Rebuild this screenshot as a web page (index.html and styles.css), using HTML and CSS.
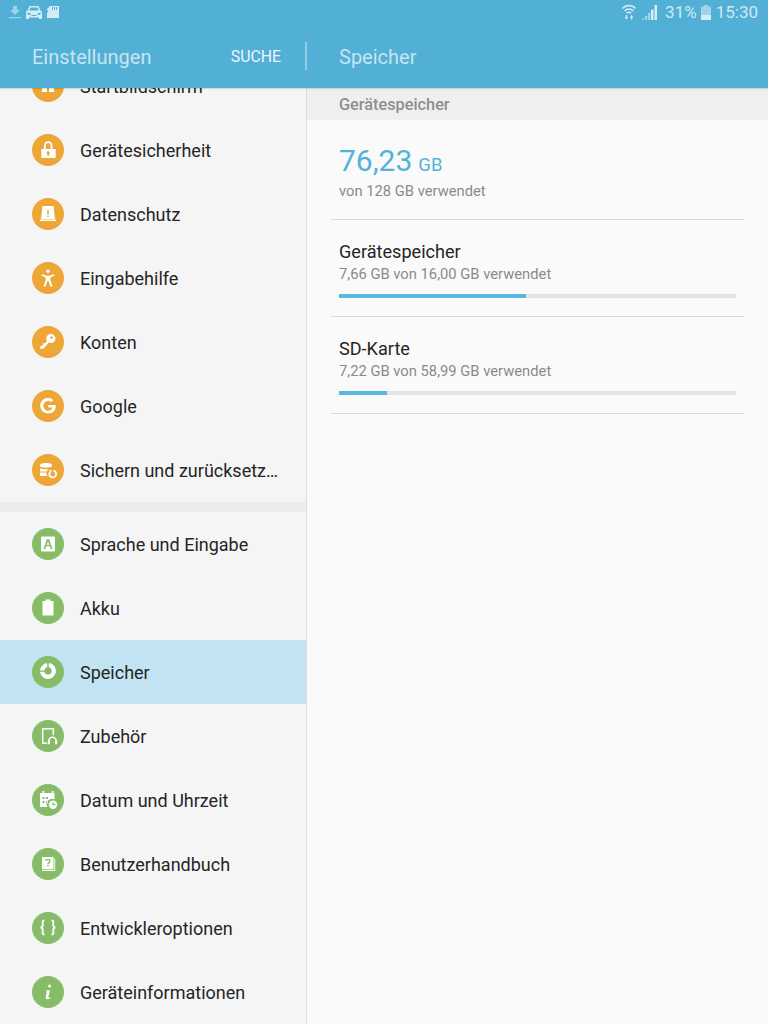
FILE: index.html
```html
<!DOCTYPE html>
<html lang="de">
<head>
<meta charset="utf-8">
<title>Speicher</title>
<link rel="stylesheet" href="styles.css">
</head>
<body>
<div class="screen">
  <header class="top">
    <div class="status">
      <div class="status-left">
        <svg class="si" width="12" height="14" viewBox="0 0 12 14"><path class="dim" d="M4 1h4v4h3L6 10 1 5h3zM0 12h12v1.200H0z"/></svg>
        <svg class="si" width="16" height="14" viewBox="0 0 16 14"><path class="solid" fill-rule="evenodd" d="M3.500 1h9l2 4.500c.8.500 1.500 1 1.500 2V14h-3v-1.500H3V14H0V7.500c0-1 .7-1.500 1.500-2zM4.500 2.500 3.200 5.500h9.600l-1.300-3zM1.500 7.500v2l3 .5V8.500zM14.500 7.500l-3 1V10l3-.5zM5.500 10v1h5v-1z"/></svg>
        <svg class="si" width="12" height="14" viewBox="0 0 12 14"><path class="solid" d="M3 1h9v12H0V8l1.500-1.500L0 5V4zM5 2v3h1V2zM7 2v3h1V2zM9 2v3h1V2z"/></svg>
      </div>
      <div class="status-right">
        <svg class="st-wifi" width="14" height="16" viewBox="0 0 14 16"><path class="ln" d="M.5 4.500c3.500-4 9.500-4 13 0M2.700 7c2.500-2.700 6.100-2.700 8.600 0M4.800 9.300c1.200-1.300 3.200-1.300 4.400 0"/><path class="solid" d="M3.800 11h1.200v2h1.100l-1.700 2.600L2.700 13h1.100zM9 15.600h1.200v-2h1.100L9.600 11 7.900 13.600H9z"/></svg>
        <svg class="st-sig" width="15" height="15" viewBox="0 0 15 15"><path class="solid" d="M12.500 0H15v15h-2.500z"/><path class="solid" d="M9 4.500h2.500V15H9z"/><path class="dim" d="M6 8h2.200v7H6zM3 11h2.200v4H3zM0 13.500h2.200V15H0z"/></svg>
        <span class="pct">31%</span>
        <svg class="st-bat" width="10" height="15" viewBox="0 0 10 15"><path class="dim" d="M3 0h4v1.500h3V10H0V1.500h3z"/><path class="solid" d="M0 10h10v5H0z"/></svg>
        <span class="clock">15:30</span>
      </div>
    </div>
    <div class="bar">
      <div class="bar-left">
        <span class="bar-title">Einstellungen</span>
        <span class="search">SUCHE</span>
      </div>
      <div class="bar-rule"></div>
      <span class="bar-title bar-page">Speicher</span>
    </div>
  </header>

  <div class="body">
    <nav class="side">
      <ul class="list list-first">
        <li class="item"><span class="ic or"><svg viewBox="0 0 32 32"><path d="M10 10h5v12h-5zM17 10h5v12h-5z"/></svg></span>Startbildschirm</li>
        <li class="item"><span class="ic or"><svg viewBox="0 0 32 32"><path fill-rule="evenodd" d="M12 15v-3.500a4.200 4.200 0 0 1 8.400 0V15h3.300v9H9.300v-9zM13.800 15h4.800v-3.500a2.400 2.400 0 0 0-4.800 0zM16.200 17.300a1.500 1.500 0 0 0-.8 2.800V22h1.600v-1.900a1.500 1.500 0 0 0-.8-2.800z"/></svg></span>Gerätesicherheit</li>
        <li class="item"><span class="ic or"><svg viewBox="0 0 32 32"><path fill-rule="evenodd" d="M10.500 8h11l1.500 13H9zM15.200 12v4.500h1.600V12zM15.200 17.500v1.600h1.600v-1.600zM8 21.500h16V23H8z"/></svg></span>Datenschutz</li>
        <li class="item"><span class="ic or"><svg viewBox="0 0 32 32"><circle cx="16" cy="9.300" r="1.700"/><path d="M10 12.300 15 13.800h2l5-1.500.4 1.300-4 1.800v2.600l2.200 6.800h-1.800L16.400 19h-.8L13.200 24.800h-1.800L13.600 18v-2.600l-4-1.800z"/></svg></span>Eingabehilfe</li>
        <li class="item"><span class="ic or"><svg viewBox="0 0 32 32"><path fill-rule="evenodd" d="M18.500 8a4.500 4.500 0 1 1-1.500 8.500L11 23l-2.500-.3L8 20.800l1.300-1.300.9.500 1-1-.6-.9 1-1 .9.600 2.600-2.700A4.500 4.500 0 0 1 18.500 8zM19.500 10.300a1.300 1.300 0 1 0 .01 0z"/></svg></span>Konten</li>
        <li class="item"><span class="ic or"><svg viewBox="0 0 32 32"><path d="M16.300 15h7.400c.5 5-2.700 8.500-7.700 8.500a7.800 7.800 0 1 1 5.300-13.500l-2 2A4.900 4.900 0 1 0 20.800 17.500h-4.500z"/></svg></span>Google</li>
        <li class="item"><span class="ic or"><svg viewBox="0 0 32 32"><path d="M8 11c0-2.700 12-2.700 12 0v1.500c-2 1.500-10 1.500-12 0zM8 14.300c2 1 6.500 1.300 9 .7-1 .6-1.800 1.300-2.200 2.500H8zM8 18.500h6.300c0 1.300.3 2.500 1 3.500H8z"/><path class="ring" d="M21.500 16.700a3.400 3.400 0 1 1-3.500 1.300"/><path d="M17 15.800l3 .5-1.500 2.500z"/></svg></span>Sichern und zurücksetz…</li>
      </ul>
      <ul class="list">
        <li class="item"><span class="ic gr"><svg viewBox="0 0 32 32"><path fill-rule="evenodd" d="M10 8.500h12a1 1 0 0 1 1 1v13a1 1 0 0 1-1 1H10a1 1 0 0 1-1-1v-13a1 1 0 0 1 1-1zM15 11 11.500 21h1.800l.9-2.700h3.600l.9 2.700h1.800L17 11zM16 13.500l1.300 3.400h-2.600z"/></svg></span>Sprache und Eingabe</li>
        <li class="item"><span class="ic gr"><svg viewBox="0 0 32 32"><path d="M13.500 7.500h5V9h3v14.500h-11V9h3z"/></svg></span>Akku</li>
        <li class="item item-on"><span class="ic gr"><svg viewBox="0 0 32 32"><path fill-rule="evenodd" d="M16.800 7A8 8 0 1 1 8 15.800H12.400A3.700 3.700 0 1 0 16.800 11.300zM15.200 7V11.300A3.700 3.700 0 0 0 12.300 14.500H8A8 8 0 0 1 15.200 7z"/></svg></span>Speicher</li>
        <li class="item"><span class="ic gr"><svg viewBox="0 0 32 32"><path class="thin" d="M15 23.300h-4.300V8.700h10.600V15"/><path class="thin" d="M16.800 23v-2a3.700 3.700 0 0 1 7.400 0v2"/><path d="M15.800 20.800h2.200v3.400h-2.200zM23 20.800h2.200v3.400H23z"/></svg></span>Zubehör</li>
        <li class="item"><span class="ic gr"><svg viewBox="0 0 32 32"><path fill-rule="evenodd" d="M10.500 7h1.800v2h7.400V7h1.800v2h1v6.500a5.300 5.300 0 0 0-7 7.500H8V9h2.500zM10.500 13v2h2v-2zM14 13v2h2v-2zM10.500 17v2h2v-2zM14 17v2h2v-2z"/><path fill-rule="evenodd" d="M21 16.500a4.200 4.200 0 1 1 0 8.400 4.200 4.200 0 0 1 0-8.400zM20.400 18v3.200h3v-1.100h-1.900V18z"/></svg></span>Datum und Uhrzeit</li>
        <li class="item"><span class="ic gr"><svg viewBox="0 0 32 32"><path fill-rule="evenodd" d="M10 9h11.500v12H10zM13.300 13h1.700c0-1.500 2.200-1.500 2.200 0 0 1.100-1.900 1.300-1.900 3.200h1.400c0-1.400 2-1.700 2-3.300 0-3-5.400-3-5.400.1zM15.300 17v1.500h1.400V17z"/><path d="M22.300 10.500h.9V23H10v-1.200h12.300z"/></svg></span>Benutzerhandbuch</li>
        <li class="item"><span class="ic gr"><svg viewBox="0 0 32 32"><path class="ring" d="M12.500 8.500c-3 0-1.700 2.300-1.700 4.300 0 1.800-.8 2.700-2.300 2.700 1.500 0 2.300 1 2.300 2.800 0 2-1.300 4.200 1.700 4.200M19.500 8.500c3 0 1.700 2.300 1.700 4.300 0 1.800.8 2.700 2.300 2.700-1.500 0-2.300 1-2.300 2.800 0 2 1.300 4.200-1.700 4.200"/></svg></span>Entwickleroptionen</li>
        <li class="item"><span class="ic gr"><svg viewBox="0 0 32 32"><circle cx="17.600" cy="10" r="1.500"/><path d="M14.200 14.200h3.800l-1.600 6.800c-.2 1 .6 1 2.100.2l.2 1c-2.700 1.600-5.600 1.600-5-1.100l1.300-5.800-1-.2z"/></svg></span>Geräteinformationen</li>
      </ul>
    </nav>

    <main class="detail">
      <div class="section-head">Gerätespeicher</div>
      <div class="rows">
        <div class="total">
          <div class="total-num"><span class="big">76,23</span><span class="unit">GB</span></div>
          <div class="sub">von 128 GB verwendet</div>
        </div>
        <div class="row">
          <div class="row-title">Gerätespeicher</div>
          <div class="sub">7,66 GB von 16,00 GB verwendet</div>
          <div class="track"><div class="fill" style="width:47.100%"></div></div>
        </div>
        <div class="row">
          <div class="row-title">SD-Karte</div>
          <div class="sub">7,22 GB von 58,99 GB verwendet</div>
          <div class="track"><div class="fill" style="width:12.100%"></div></div>
        </div>
      </div>
    </main>
  </div>
</div>
</body>
</html>
```
FILE: styles.css
```css
* { box-sizing: border-box; }
html, body { margin: 0; padding: 0; }
body { font-family: Roboto, "Liberation Sans", sans-serif; background: #fafafa; }
.screen { width: 768px; height: 1024px; overflow: hidden; display: flex; flex-direction: column; }

.top { height: 88px; background: #52afd6; flex: none; position: relative; z-index: 2; box-shadow: 0 1px 1px rgba(0,0,0,.12); }
.status { height: 24px; display: flex; justify-content: space-between; align-items: center; padding: 0 10px 0 9px; }
.status-left { display: flex; gap: 5px; align-items: center; }
.status-right { display: flex; align-items: center; color: #cfe9f3; font-size: 17px; }
.solid { fill: #d3ecf5; }
.dim { fill: #9fd4e9; }
.ln { fill: none; stroke: #d3ecf5; stroke-width: 1.500; }
.st-sig { margin-left: 6px; }
.pct { margin-left: 8px; margin-right: 4px; }
.clock { margin-left: 5px; }

.bar { height: 64px; display: flex; align-items: center; padding-top: 2px; }
.bar-left { width: 305px; padding: 0 24px 0 32px; display: flex; justify-content: space-between; align-items: center; }
.bar-title { font-size: 20px; color: #c5e5f2; }
.search { font-size: 15.800px; color: #edf7fb; margin-bottom: 2px; }
.bar-rule { width: 2px; height: 28px; background: #93cee6; margin-bottom: 2px; }
.bar-page { margin-left: 32px; }

.body { flex: 1; display: flex; min-height: 0; }
.side { width: 307px; flex: none; overflow: hidden; background: #ececec; border-right: 1px solid #dedede; display: flex; flex-direction: column; gap: 10px; }
.list { list-style: none; margin: 0; padding: 0; background: #f5f5f5; }
.list-first { margin-top: -34px; }
.item { height: 64px; display: flex; align-items: center; padding-left: 32px; gap: 16px; font-size: 18px; color: #252525; }
.item-on { background: #c2e3f1; }
.ic { width: 32px; height: 32px; border-radius: 50%; flex: none; display: block; }
.ic svg { display: block; width: 32px; height: 32px; fill: #fff; }
.or { background: #eda736; }
.gr { background: #86bb67; }
.ring { fill: none; stroke: #fff; stroke-width: 1.800; }
.thin { fill: none; stroke: #fff; stroke-width: 1.500; }

.detail { flex: 1; min-width: 0; background: #fafafa; }
.section-head { height: 32px; background: #efefef; padding-left: 32px; font-size: 16.300px; font-weight: 500; color: #8e8e8e; line-height: 34px; }
.rows { padding: 0 24px; }
.total { height: 100px; padding: 22px 8px 0; border-bottom: 1px solid #d9d9d9; }
.total-num { display: flex; align-items: baseline; gap: 6px; color: #52b3da; height: 38px; }
.big { font-size: 30px; line-height: 38px; }
.unit { font-size: 18.500px; }
.sub { font-size: 14.750px; color: #8a8a8a; line-height: 20px; }
.total .sub { margin-top: 1px; }
.row { height: 97px; padding: 20px 8px 0; border-bottom: 1px solid #d9d9d9; }
.row-title { font-size: 18.100px; color: #252525; line-height: 24px; }
.track { height: 4px; background: #e3e3e3; margin-top: 10px; }
.fill { height: 4px; background: #59b8de; }
```
